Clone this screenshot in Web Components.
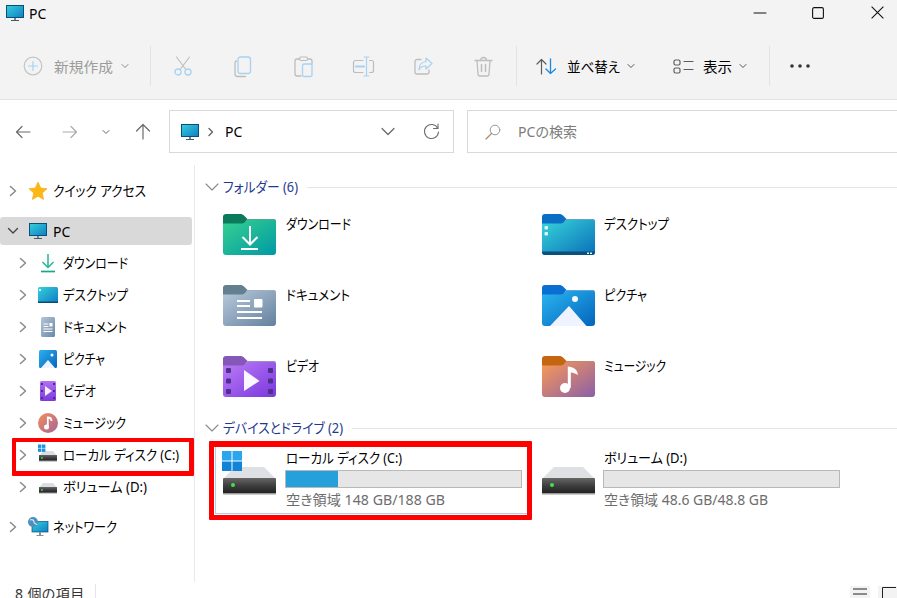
<!DOCTYPE html>
<html lang="ja"><head><meta charset="utf-8"><title>PC</title>
<style>
html,body{margin:0;padding:0;height:598px;overflow:hidden;background:#fff}
body{font:14px "Noto Sans","Noto Sans CJK JP",sans-serif;color:#000;font-feature-settings:"palt"}
</style></head><body>
<fe-explorer></fe-explorer>
<script>
const folder=(id,a,b,tab,edge,extra)=>`<svg width="53" height="41" viewBox="0 0 53 41"><defs><linearGradient id="${id}" x1="0" y1="0" x2="1" y2="1"><stop offset="0" stop-color="${a}"/><stop offset="1" stop-color="${b}"/></linearGradient></defs>
<path d="M0 3a3 3 0 0 1 3-3h14c2 0 3 .6 4.500 2l3 3H50a3 3 0 0 1 3 3v6H0z" fill="${tab}"/><path d="M24 5h26a3 3 0 0 1 3 3v3H20z" fill="${edge}"/>
<path d="M0 9.500h18c2 0 3.500-.6 5-2l2-1.500h25a3 3 0 0 1 3 3v29a3 3 0 0 1-3 3H3a3 3 0 0 1-3-3z" fill="url(#${id})"/>${extra}</svg>`;
const drive=`<linearGradient id="dk" x1="0" y1="0" x2="0" y2="1"><stop offset="0" stop-color="#666"/><stop offset=".5" stop-color="#3c3c3c"/><stop offset="1" stop-color="#1f1f1f"/></linearGradient>`;
const bigDrive=(win)=>`<svg width="53" height="44" viewBox="0 0 53 44"><defs>${drive}</defs>
<path d="M12 16h29l12 12H0z" fill="#dfe0e3"/><rect x="0" y="27" width="53" height="16" rx="1" fill="url(#dk)"/><rect x="0" y="42" width="53" height="1.500" fill="#9a9a9a"/><circle cx="10" cy="34" r="2" fill="#3fe24a"/>${win?`<g fill="#1f9be6"><rect x="-1" width="9.500" height="9.500" fill="#2aa6ee"/><rect x="9.500" width="9.500" height="9.500" fill="#2aa6ee"/><rect x="-1" y="10.500" width="9.500" height="9.500" fill="#1183d8"/><rect x="9.500" y="10.500" width="9.500" height="9.500" fill="#1183d8"/></g>`:''}</svg>`;
const navDrive=(win)=>`<svg width="20" height="20" viewBox="0 0 20 20"><defs>${drive}</defs><path d="M5 6h10l4 5H1z" fill="#dcdde0"/><rect x="1" y="10" width="18" height="6" fill="url(#dk)"/><rect x="1" y="15.500" width="18" height="1" fill="#999"/><circle cx="4" cy="13" r=".9" fill="#3fe24a"/>${win?`<g fill="#1f93e2"><rect x="0" y="-.5" width="3.400" height="3.400"/><rect x="4" y="-.5" width="3.400" height="3.400"/><rect x="0" y="3.500" width="3.400" height="3.400"/><rect x="4" y="3.500" width="3.400" height="3.400"/></g>`:''}</svg>`;
const monitor=(w,h)=>`<svg width="${w}" height="${h}" viewBox="0 0 18 16"><defs><linearGradient id="m" x1="0" y1="0" x2="1" y2="1"><stop offset="0" stop-color="#35d0dc"/><stop offset="1" stop-color="#0f7ec4"/></linearGradient></defs><rect x=".5" y=".5" width="17" height="12" fill="url(#m)" stroke="#0b4f78"/><rect x="8" y="13" width="2" height="2" fill="#6f8795"/><rect x="5" y="15" width="8" height="1" fill="#3f5b6b"/></svg>`;
const s=(w,h,vb,body)=>`<svg width="${w}" height="${h}" viewBox="${vb}" fill="none" stroke-linecap="round" stroke-linejoin="round">${body}</svg>`;
const G='#bdbdbd',B='#a8d2f2';
const ICONS={
 monitor:monitor(18,16),
 chevR:s(8,12,'0 0 8 12','<path d="M1.500 1.500 6.500 6l-5 4.500" stroke="#8a8a8a" stroke-width="1.500"/>'),
 chevD:s(12,8,'0 0 12 8','<path d="M1.500 1.500 6 6l4.500-4.500" stroke="#444" stroke-width="1.400"/>'),
 chevDl:s(14,8,'0 0 14 8','<path d="M1 1l6 6 6-6" stroke="#8a8a8a" stroke-width="1.100"/>'),
 chevS:s(8,6,'0 0 8 6','<path d="M1 1.500 4 4.500l3-3" stroke="#8a8a8a" stroke-width="1"/>'),
 chevN:s(8,6,'0 0 8 6','<path d="M1 1.500 4 4.500l3-3" stroke="#666" stroke-width="1"/>'),
 chevSd:s(8,6,'0 0 8 6','<path d="M1 1.500 4 4.500l3-3" stroke="#555" stroke-width="1"/>'),
 addrChev:s(16,9,'0 0 16 9','<path d="M2 1.500 8 7.500l6-6" stroke="#666" stroke-width="1.200"/>'),
 crumb:s(6,10,'0 0 6 10','<path d="M1 1.500 4.500 5 1 8.500" stroke="#666" stroke-width="1.400"/>'),
 back:s(16,14,'0 0 16 14','<path d="M15 7H1.500M7 1.500 1.500 7 7 12.500" stroke="#6b6b6b" stroke-width="1.200"/>'),
 fwd:s(16,14,'0 0 16 14','<path d="M1 7h13.500M9 1.500 14.500 7 9 12.500" stroke="#ababab" stroke-width="1.200"/>'),
 up:s(16,17,'0 0 16 17','<path d="M8 16V1.500M1.500 8 8 1.500 14.500 8" stroke="#6b6b6b" stroke-width="1.200"/>'),
 refresh:s(17,17,'0 0 17 17','<path d="M14.700 5.200A7 7 0 1 0 15.500 9" stroke="#6b6b6b" stroke-width="1.100"/><path d="M15 1v4.500h-4.500" stroke="#6b6b6b" stroke-width="1.100"/>'),
 search:s(16,16,'0 0 16 16','<circle cx="10" cy="6" r="4.800" stroke="#8a9aa8" stroke-width="1"/><path d="M6.500 9.500 1 15" stroke="#b48a5a" stroke-width="1.200"/>'),
 add:s(20,20,'0 0 20 20',`<circle cx="10" cy="10" r="8.800" stroke="#c4c4c4" stroke-width="1.200"/><path d="M10 5.500v9M5.500 10h9" stroke="${B}" stroke-width="1.200"/>`),
 cut:s(20,20,'0 0 20 20',`<path d="M3.500 1l9 12M16.500 1l-9 12" stroke="${G}" stroke-width="1.100"/><circle cx="5" cy="16" r="3" stroke="${B}" stroke-width="1.300"/><circle cx="15" cy="16" r="3" stroke="${B}" stroke-width="1.300"/>`),
 copy:s(18,21,'0 0 18 21',`<path d="M2.500 5A2 2 0 0 0 1 7v11a2.500 2.500 0 0 0 2.500 2.500h8" stroke="${G}" stroke-width="1.300"/><rect x="4" y="1" width="12.500" height="16.500" rx="2.500" stroke="${B}" stroke-width="1.300"/>`),
 paste:s(19,21,'0 0 19 21',`<path d="M5 3H3a2 2 0 0 0-2 2v13a2 2 0 0 0 2 2h4M14 3h2a2 2 0 0 1 2 2v3" stroke="${G}" stroke-width="1.300"/><rect x="5.500" y="1" width="8" height="3.500" rx="1.500" stroke="${G}" stroke-width="1.200"/><rect x="8.500" y="8" width="9.500" height="12.500" rx="1.500" stroke="${B}" stroke-width="1.300"/>`),
 rename:s(21,21,'0 0 21 21',`<path d="M10 4.500H2.500a2 2 0 0 0-2 2v8a2 2 0 0 0 2 2H10M16.500 4.500h2a2 2 0 0 1 2 2v8a2 2 0 0 1-2 2h-2" stroke="${G}" stroke-width="1.200"/><path d="M3 10.500h8" stroke="${B}" stroke-width="2.200"/><path d="M13.500 1v19M11 1h5M11 20h5" stroke="${B}" stroke-width="1.200"/>`),
 share:s(19,18,'0 0 19 18',`<path d="M7 2.500H3a2 2 0 0 0-2 2V15a2 2 0 0 0 2 2h10a2 2 0 0 0 2-2v-2" stroke="${G}" stroke-width="1.300"/><path d="M12 1l6 5.500L12 12V9C8 9 6 10.500 5 13c0-5 2.500-8 7-8.500z" stroke="${B}" stroke-width="1.200"/>`),
 trash:s(19,21,'0 0 19 21',`<path d="M1 4.500h17M6.500 4.500c0-4 6-4 6 0M3 4.500 4 18a2 2 0 0 0 2 2h7a2 2 0 0 0 2-2l1-13.500" stroke="${G}" stroke-width="1.300"/><path d="M7.500 8.500v7M11.500 8.500v7" stroke="${G}" stroke-width="1.500"/>`),
 sort:s(21,17,'0 0 21 17','<path d="M5.500 16V1.500M1 6l4.500-4.500L10 6" stroke="#5c5c5c" stroke-width="1.200"/><path d="M14.500 1v14.500M10 11l4.500 4.500L19.500 11" stroke="#1a8ae0" stroke-width="1.300"/>'),
 view:s(21,15,'0 0 21 15','<rect x="1" y="1" width="6" height="5" rx="1.500" stroke="#5c5c5c" stroke-width="1.200"/><rect x="1" y="9" width="6" height="5" rx="1.500" stroke="#5c5c5c" stroke-width="1.200"/><path d="M11 2.500h9M11 10.500h9" stroke="#5c5c5c" stroke-width="1.200"/>'),
 min:s(12,2,'0 0 12 2','<path d="M0 1h12" stroke="#111"/>'),
 max:s(12,12,'0 0 12 12','<rect x=".6" y=".6" width="10.800" height="10.800" rx="1.500" stroke="#111" stroke-width="1.100"/>'),
 close:s(13,13,'0 0 13 13','<path d="M.6.600l11.800 11.800M12.400.600.600 12.400" stroke="#111" stroke-width="1.100" stroke-linecap="butt"/>'),
 star:`<svg width="20" height="20" viewBox="0 0 20 20"><path d="M10 1l2.700 6 6.300.7-4.700 4.300 1.300 6.500-5.600-3.300-5.600 3.300L5.700 12 1 7.700 7.300 7z" fill="#fdb813" stroke="#f2a40a" stroke-width=".6" stroke-linejoin="round"/></svg>`,
 nDown:s(20,20,'0 0 20 20','<path d="M10 1v13M4.500 9 10 14.500 15.500 9" stroke="#27b597" stroke-width="1.500" stroke-linecap="butt"/><path d="M3 18.500h14" stroke="#19a68c" stroke-width="1.700" stroke-linecap="butt"/>'),
 nDesk:`<svg width="20" height="20" viewBox="0 0 20 20"><defs><linearGradient id="d" x1="0" y1="0" x2="1" y2="1"><stop offset="0" stop-color="#37cfdc"/><stop offset="1" stop-color="#0c7cc2"/></linearGradient></defs><rect y="2" width="20" height="16" rx="1.500" fill="url(#d)"/><rect y="16.500" width="20" height="1.500" fill="#0b4a73"/><rect x="1" y="4" width="2" height="2" fill="#dff"/></svg>`,
 nDoc:`<svg width="20" height="20" viewBox="0 0 20 20"><defs><linearGradient id="d" x1="0" y1="0" x2="1" y2="1"><stop offset="0" stop-color="#b4c6da"/><stop offset="1" stop-color="#6b88a6"/></linearGradient></defs><rect x="3" width="14" height="20" rx="1.500" fill="url(#d)"/><path d="M5.500 7h5M5.500 9.500h5M5.500 12h9M5.500 14.500h9" stroke="#fff"/><rect x="11.500" y="6" width="3" height="3.500" fill="#fff"/></svg>`,
 nPic:`<svg width="20" height="20" viewBox="0 0 20 20"><defs><linearGradient id="d" x1="0" y1="0" x2="1" y2="1"><stop offset="0" stop-color="#2cb0ee"/><stop offset="1" stop-color="#0664bd"/></linearGradient></defs><rect x="1" y="1" width="18" height="18" rx="1.500" fill="url(#d)"/><path d="M3 19 10 11l7 8z" fill="#eef3ff"/><circle cx="14" cy="6" r="1.500" fill="#fff"/></svg>`,
 nVid:`<svg width="20" height="20" viewBox="0 0 20 20"><defs><linearGradient id="d" x1="0" y1="0" x2="0" y2="1"><stop offset="0" stop-color="#b170f5"/><stop offset="1" stop-color="#7b3bdc"/></linearGradient></defs><rect x="2" width="16" height="20" rx="1.500" fill="url(#d)"/><g fill="#4f2a90"><rect x="3" y="2" width="2" height="2"/><rect x="3" y="9" width="2" height="2"/><rect x="3" y="16" width="2" height="2"/><rect x="15" y="2" width="2" height="2"/><rect x="15" y="9" width="2" height="2"/><rect x="15" y="16" width="2" height="2"/></g><path d="M7 5l7 5-7 5z" fill="#f6efff"/></svg>`,
 nMus:`<svg width="20" height="20" viewBox="0 0 20 20"><defs><linearGradient id="d" x1="0" y1="0" x2="1" y2="1"><stop offset="0" stop-color="#f29058"/><stop offset="1" stop-color="#a8639a"/></linearGradient></defs><circle cx="10" cy="10" r="10" fill="url(#d)"/><circle cx="8.500" cy="14" r="2.500" fill="#fff"/><path d="M9.800 14V4.500c2 0 3.700 1 3.700 3.500" stroke="#fff" stroke-width="1.800" fill="none"/></svg>`,
 nC:navDrive(true),nD:navDrive(false),
 nNet:`<svg width="20" height="20" viewBox="0 0 20 20"><defs><linearGradient id="d" x1="0" y1="0" x2="1" y2="1"><stop offset="0" stop-color="#35d0dc"/><stop offset="1" stop-color="#0f7ec4"/></linearGradient></defs><rect x="4" y="4.500" width="16" height="10.500" fill="url(#d)" stroke="#0b4f78" stroke-width=".7"/><rect x="11" y="15" width="2" height="3" fill="#7a93a1"/><rect x="8.500" y="18" width="7" height="1" fill="#7a93a1"/><circle cx="5" cy="5" r="5" fill="#4d8fbd"/><path d="M2 3c2-1 4 0 4 2s3 2 3 3" stroke="#cfe6f5" stroke-width="1.200" fill="none"/></svg>`,
 fDown:folder('g','#36d190','#0099a5','#0b7a5c','#54a893','<path d="M27 12v18M19.500 23 27 30.500 34.500 23" stroke="#fff" stroke-width="2" fill="none"/><path d="M18 35h17" stroke="#fff" stroke-width="2"/>'),
 fDesk:folder('g','#37d4da','#0a6fb8','#0a6fc4','#5ea5cf','<rect x="2.500" y="12" width="3.500" height="3.500" rx="1" fill="#dff7f7"/><rect x="2.500" y="18" width="3.500" height="3.500" rx="1" fill="#dff7f7"/><path d="M0 37.500h53V38a3 3 0 0 1-3 3H3a3 3 0 0 1-3-3z" fill="#0c4f7c"/><rect x="45" y="38.500" width="2" height="1.500" fill="#cfe"/><rect x="48" y="38.500" width="2" height="1.500" fill="#cfe"/>'),
 fDoc:folder('g','#b9cadc','#64809e','#64808f','#9db1c0','<path d="M14 16h13M14 21h13M14 27h25M14 33h25" stroke="#fff" stroke-width="2"/><rect x="31" y="14" width="8.500" height="8.500" rx="1" fill="#fff"/>'),
 fPic:folder('g','#2bb5f0','#0364bb','#0a6fd0','#5ea5dc','<path d="M8 41 27 21 44.500 41z" fill="#eef3ff"/><circle cx="33" cy="14" r="3" fill="#f4f8ff"/>'),
 fVid:folder('g','#bb7cf8','#7a37dc','#8558b8','#a58ac8','<g fill="#4f2f8c"><rect x="3" y="12" width="5" height="5" rx="1"/><rect x="3" y="22.500" width="5" height="5" rx="1"/><rect x="3" y="33" width="5" height="5" rx="1"/><rect x="45" y="12" width="5" height="5" rx="1"/><rect x="45" y="22.500" width="5" height="5" rx="1"/><rect x="45" y="33" width="5" height="5" rx="1"/></g><path d="M21 14l15.500 11L21 35z" fill="#fbf7ff"/>'),
 fMus:folder('g','#fb9a55','#8a5fa8','#c4660f','#c48870','<circle cx="23" cy="32" r="5" fill="#fff"/><path d="M25.800 32V10.500c5 .5 10 2.500 10 8.500-3-2-6-2.500-7-2.500V32z" fill="#fff"/>'),
 bC:bigDrive(true),bD:bigDrive(false)
};
class Base extends HTMLElement{
 constructor(){super();this.attachShadow({mode:'open'})}
 render(css,html){this.shadowRoot.innerHTML=`<style>${css}</style>${html}`}
}
const def=(n,c)=>customElements.define(n,c);
def('fe-icon',class extends Base{connectedCallback(){this.render(':host{display:inline-flex;align-items:center;justify-content:center;flex:none}svg{display:block;overflow:visible}',ICONS[this.getAttribute('name')]||'')}});
/* text condensed horizontally to the set width (the UI font's kana are narrow) */
def('fe-t',class extends Base{connectedCallback(){this.render(':host{display:inline-block;white-space:nowrap;flex:none}span{display:inline-block;transform-origin:0 50%}','<span><slot></slot></span>');
 const w=+this.getAttribute('w'),sp=this.shadowRoot.querySelector('span'),m=sp.getBoundingClientRect().width;
 if(w&&m){sp.style.transform=`scaleX(${w/m})`;this.style.width=w+'px'}}});
def('fe-titlebar',class extends Base{connectedCallback(){this.render(`
:host{display:flex;height:46px;background:#f3f3f3;position:relative;flex:none}
.l{display:flex;align-items:flex-start;padding:5px 0 0 6px;gap:5px;line-height:18px;font-size:14px;flex:1}
.c{display:flex;height:25px;align-items:center;gap:0}
.c span{width:58px;display:flex;justify-content:center}
`,`<div class="l"><fe-icon name="monitor"></fe-icon><span>PC</span></div>
<div class="c"><span><fe-icon name="min"></fe-icon></span><span><fe-icon name="max"></fe-icon></span><span style="width:26px;margin-right:0;padding-left:24px;justify-content:flex-start"><fe-icon name="close"></fe-icon></span></div>`)}});
def('fe-toolbar',class extends Base{connectedCallback(){this.render(`
:host{display:flex;align-items:center;height:40px;padding-bottom:13px;background:#f3f3f3;border-bottom:1px solid #e2e2e2;flex:none;font-size:14px;white-space:nowrap}
.sep{width:1px;height:40px;background:#e3e3e3;flex:none}
.slot{width:60px;display:flex;justify-content:center;flex:none}
.dis{color:#9c9c9c}
`,`<fe-icon name="add" style="margin-left:23px"></fe-icon><fe-t class="dis" w="59" style="margin-left:11px">新規作成</fe-t><fe-icon name="chevS" style="margin-left:8px"></fe-icon>
<span class="sep" style="margin-left:21px"></span><span style="width:2px"></span>
<span class="slot"><fe-icon name="cut"></fe-icon></span><span class="slot"><fe-icon name="copy"></fe-icon></span><span class="slot"><fe-icon name="paste"></fe-icon></span><span class="slot"><fe-icon name="rename"></fe-icon></span><span class="slot"><fe-icon name="share"></fe-icon></span><span class="slot"><fe-icon name="trash"></fe-icon></span>
<span class="sep" style="margin-left:3px"></span>
<fe-icon name="sort" style="margin-left:19px"></fe-icon><fe-t w="53" style="margin-left:10px">並べ替え</fe-t><fe-icon name="chevSd" style="margin-left:7px"></fe-icon>
<fe-icon name="view" style="margin-left:38px"></fe-icon><fe-t w="29" style="margin-left:9px">表示</fe-t><fe-icon name="chevSd" style="margin-left:7px"></fe-icon>
<span class="sep" style="margin-left:22px"></span>
<svg width="20" height="4" viewBox="0 0 20 4" style="margin-left:20px"><circle cx="2" cy="2" r="1.800" fill="#333"/><circle cx="10" cy="2" r="1.800" fill="#333"/><circle cx="18" cy="2" r="1.800" fill="#333"/></svg>`)}});
def('fe-addressbar',class extends Base{connectedCallback(){this.render(`
:host{display:flex;align-items:center;height:43px;padding:10px 0 12px;background:#fff;flex:none;font-size:14px}
.box{height:41px;border:1px solid #d9d9d9;display:flex;align-items:center;background:#fff;flex:none}
.addr{width:283px}
.search{width:440px;margin-left:13px;color:#7c7c7c}
`,`<fe-icon name="back" style="margin-left:15px"></fe-icon><fe-icon name="fwd" style="margin-left:31px"></fe-icon><fe-icon name="chevN" style="margin-left:24px"></fe-icon><fe-icon name="up" style="margin-left:25px"></fe-icon>
<div class="box addr" style="margin-left:18px"><fe-icon name="monitor" style="margin-left:11px"></fe-icon><fe-icon name="crumb" style="margin-left:9px"></fe-icon><span style="margin-left:11px;flex:1">PC</span><fe-icon name="addrChev" style="margin-right:27px"></fe-icon><fe-icon name="refresh" style="margin-right:13px"></fe-icon></div>
<div class="box search"><fe-icon name="search" style="margin-left:17px"></fe-icon><fe-t w="59" style="margin-left:17px;margin-bottom:1px">PCの検索</fe-t></div>`)}});
def('fe-nav-item',class extends Base{connectedCallback(){const a=n=>this.getAttribute(n);const lvl=+a('level')||0,sel=this.hasAttribute('selected');this.render(`
:host{display:flex;align-items:center;position:relative;height:${sel?28:32}px;margin:${sel?'2px 2px 2px 0':'0'};padding-left:${5+lvl*10}px;${sel?'background:#d9d9d9;border-radius:3px;':''}${a('mt')?`margin-top:${a('mt')}px;`:''}font-size:14px;white-space:nowrap}
.ch{width:16px;display:flex;justify-content:center;flex:none}
span.t{margin-left:5px;margin-bottom:${sel?0:2}px}
.hl{position:absolute;left:12px;right:0;top:-1px;bottom:-5px;border:solid #f00;border-width:4px 5px 5px 4px;border-radius:1px;pointer-events:none}
`,`<span class="ch"><fe-icon name="${this.hasAttribute('open')?'chevD':'chevR'}"></fe-icon></span><fe-icon name="${a('icon')}" style="margin-left:7px;width:20px"></fe-icon><span class="t"><slot></slot></span>${this.hasAttribute('highlight')?'<div class="hl"></div>':''}`)}});
def('fe-sidebar',class extends Base{connectedCallback(){this.render(`
:host{display:flex;flex-direction:column;width:194px;border-right:1px solid #e8e8e8;padding-top:10px;box-sizing:content-box;flex:none;overflow:visible}
`,`<slot></slot>`)}});
def('fe-section',class extends Base{connectedCallback(){this.render(`
:host{display:flex;align-items:center;height:20px;font-size:14px;color:#1c3a8f;white-space:nowrap;margin-left:-22px}
.c{width:22px;display:flex}
.x{margin-bottom:2px}
.l{flex:1;height:1px;background:#e5e5e5;margin-left:9px}
`,`<span class="c"><fe-icon name="chevDl" style="margin-left:4px"></fe-icon></span><span class="x"><slot></slot></span><span class="l"></span>`)}});
def('fe-folder',class extends Base{connectedCallback(){this.render(`
:host{display:flex;gap:${this.getAttribute('g')||10}px;height:41px;font-size:14px}
span{line-height:20px}
`,`<fe-icon name="${this.getAttribute('icon')}" style="align-items:flex-start"></fe-icon><span><slot></slot></span>`)}});
def('fe-drive',class extends Base{connectedCallback(){const a=n=>this.getAttribute(n),hl=this.hasAttribute('highlight');this.render(`
:host{display:flex;position:relative;box-sizing:border-box;width:${hl?313:312}px;height:68px;border:1px solid ${hl?'#a6d5f2':'transparent'};padding:1px 0 0 7px;font-size:14px;gap:${a('g')||9}px}
.i{display:block;margin-top:3px}
.col{display:flex;flex-direction:column;width:237px}
.n{line-height:20px;height:20px;padding-left:1px}
.bar{height:18px;box-sizing:border-box;margin-top:2px;border:1px solid #b9b9b9;background:#e6e6e6}
.fill{height:100%;background:#26a0da}
.s{line-height:20px;color:#6d6d6d;margin-top:2px;padding-left:1px}
.hl{position:absolute;left:-7px;right:-5px;top:-6px;bottom:-7px;border:solid #f00;border-width:6px 5px 5px;border-radius:1px;pointer-events:none}
`,`<fe-icon class="i" name="${a('icon')}" style="align-items:flex-start;height:44px"></fe-icon><div class="col"><div class="n"><slot></slot></div><div class="bar"><div class="fill" style="width:${a('pct')}%"></div></div><div class="s"><fe-t w="${a('fw')}">${a('free')}</fe-t></div></div>${hl?'<div class="hl"></div>':''}`)}});
def('fe-content',class extends Base{connectedCallback(){this.render(`
:host{display:block;flex:1;padding:12px 0 0 28px;min-width:0}
`,`<slot></slot>`)}});
def('fe-grid',class extends Base{connectedCallback(){this.render(`
:host{display:grid;grid-template-columns:319px 319px;row-gap:30px;margin:17px 0 21px}
`,`<slot></slot>`)}});
def('fe-drives',class extends Base{connectedCallback(){this.render(`
:host{display:grid;grid-template-columns:312px 312px;column-gap:7px;margin:8px 0 0 -8px}
`,`<slot></slot>`)}});
def('fe-statusbar',class extends Base{connectedCallback(){this.render(`
:host{display:flex;height:16px;align-items:flex-start;font-size:14px;color:#333;overflow:hidden;flex:none;position:relative}
.t{margin:2px 0 0 15px;width:80px;line-height:20px;letter-spacing:.4px;height:20px;border-right:1px solid #e5e5e5}
.r{margin-left:auto;display:flex;gap:8px;padding-top:4px}
.b{width:20px;height:20px;background:#f3f3f3;display:flex;justify-content:center;padding-top:1px;box-sizing:border-box}
`,`<div class="t">8 個の項目</div><div class="r"><div class="b"><svg width="14" height="8" viewBox="0 0 14 8"><path d="M0 2h14M0 7h14" stroke="#222"/></svg></div><div class="b" style="width:19px"><svg width="14" height="14" viewBox="0 0 14 14" style="margin-left:3px"><path d="M.5 14V.5H14" fill="none" stroke="#222"/></svg></div></div>`)}});
def('fe-explorer',class extends Base{connectedCallback(){this.render(`
:host{display:flex;flex-direction:column;width:897px;height:598px;overflow:hidden}
.main{display:flex;height:417px;flex:none}
`,`<fe-titlebar></fe-titlebar><fe-toolbar></fe-toolbar><fe-addressbar></fe-addressbar>
<div class="main"><fe-sidebar>
<fe-nav-item icon="star"><fe-t w="93">クイック アクセス</fe-t></fe-nav-item>
<fe-nav-item icon="monitor" open selected mt="10">PC</fe-nav-item>
<fe-nav-item level="1" icon="nDown"><fe-t w="65">ダウンロード</fe-t></fe-nav-item>
<fe-nav-item level="1" icon="nDesk"><fe-t w="65">デスクトップ</fe-t></fe-nav-item>
<fe-nav-item level="1" icon="nDoc"><fe-t w="64">ドキュメント</fe-t></fe-nav-item>
<fe-nav-item level="1" icon="nPic"><fe-t w="42">ピクチャ</fe-t></fe-nav-item>
<fe-nav-item level="1" icon="nVid"><fe-t w="33">ビデオ</fe-t></fe-nav-item>
<fe-nav-item level="1" icon="nMus"><fe-t w="63">ミュージック</fe-t></fe-nav-item>
<fe-nav-item level="1" icon="nC" highlight><fe-t w="116">ローカル ディスク (C:)</fe-t></fe-nav-item>
<fe-nav-item level="1" icon="nD"><fe-t w="84">ボリューム (D:)</fe-t></fe-nav-item>
<fe-nav-item icon="nNet" mt="8"><fe-t w="64">ネットワーク</fe-t></fe-nav-item>
</fe-sidebar>
<fe-content>
<fe-section><fe-t w="75">フォルダー (6)</fe-t></fe-section>
<fe-grid>
<fe-folder icon="fDown"><fe-t w="65">ダウンロード</fe-t></fe-folder><fe-folder icon="fDesk" g="9"><fe-t w="65">デスクトップ</fe-t></fe-folder>
<fe-folder icon="fDoc"><fe-t w="64">ドキュメント</fe-t></fe-folder><fe-folder icon="fPic" g="9"><fe-t w="43">ピクチャ</fe-t></fe-folder>
<fe-folder icon="fVid"><fe-t w="33">ビデオ</fe-t></fe-folder><fe-folder icon="fMus" g="9"><fe-t w="62">ミュージック</fe-t></fe-folder>
</fe-grid>
<fe-section><fe-t w="120">デバイスとドライブ (2)</fe-t></fe-section>
<fe-drives>
<fe-drive icon="bC" pct="22" free="空き領域 148 GB/188 GB" fw="159" highlight><fe-t w="116">ローカル ディスク (C:)</fe-t></fe-drive>
<fe-drive icon="bD" pct="0" g="8" free="空き領域 48.6 GB/48.8 GB" fw="164"><fe-t w="83">ボリューム (D:)</fe-t></fe-drive>
</fe-drives>
</fe-content></div>
<fe-statusbar></fe-statusbar>`)}});
</script>
</body></html>
